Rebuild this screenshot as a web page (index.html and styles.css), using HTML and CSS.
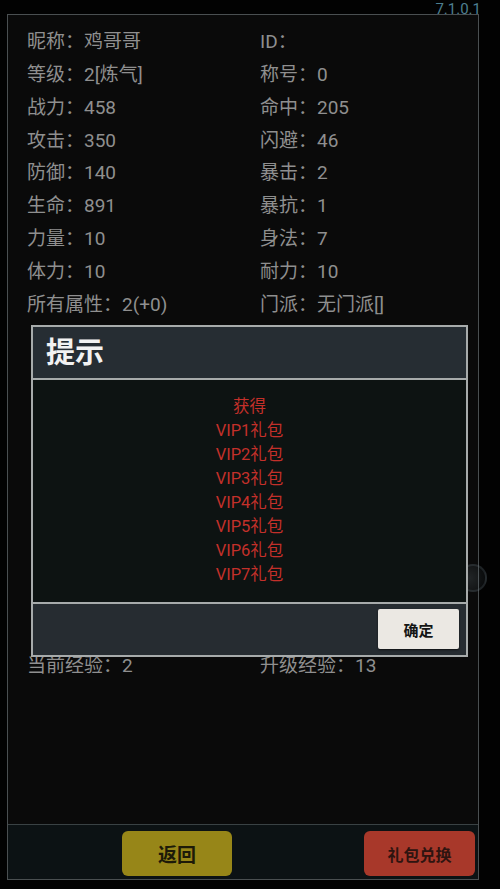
FILE: index.html
```html
<!DOCTYPE html>
<html lang="zh">
<head>
<meta charset="utf-8">
<title>角色属性</title>
<link rel="stylesheet" href="styles.css">
</head>
<body>
<div class="version">7.1.0.1</div>
<div class="panel">
  <div class="stats">
    <div class="row"><span class="cell">昵称：鸡哥哥</span><span class="cell">ID：</span></div>
    <div class="row"><span class="cell">等级：2[炼气]</span><span class="cell">称号：0</span></div>
    <div class="row"><span class="cell">战力：458</span><span class="cell">命中：205</span></div>
    <div class="row"><span class="cell">攻击：350</span><span class="cell">闪避：46</span></div>
    <div class="row"><span class="cell">防御：140</span><span class="cell">暴击：2</span></div>
    <div class="row"><span class="cell">生命：891</span><span class="cell">暴抗：1</span></div>
    <div class="row"><span class="cell">力量：10</span><span class="cell">身法：7</span></div>
    <div class="row"><span class="cell">体力：10</span><span class="cell">耐力：10</span></div>
    <div class="row"><span class="cell">所有属性：2(+0)</span><span class="cell">门派：无门派[]</span></div>
    <div class="hidden-rows"></div>
    <div class="row"><span class="cell">当前经验：2</span><span class="cell">升级经验：13</span></div>
  </div>
  <div class="bottombar">
    <button class="btn btn-back">返回</button>
    <button class="btn btn-gift">礼包兑换</button>
  </div>
</div>

<div class="floatball"></div>

<div class="dialog">
  <div class="dlg-title">提示</div>
  <div class="dlg-body">
    <div>获得</div>
    <div>VIP1礼包</div>
    <div>VIP2礼包</div>
    <div>VIP3礼包</div>
    <div>VIP4礼包</div>
    <div>VIP5礼包</div>
    <div>VIP6礼包</div>
    <div>VIP7礼包</div>
  </div>
  <div class="dlg-foot">
    <button class="ok">确定</button>
  </div>
</div>
</body>
</html>
```
FILE: styles.css
```css
* { box-sizing: border-box; }
html, body {
  margin: 0;
  padding: 0;
  background: #020202;
  width: 500px;
  height: 889px;
  overflow: hidden;
  font-family: Roboto, "Noto Sans CJK SC", sans-serif;
}
.version {
  height: 14px;
  line-height: 19px;
  font-size: 15px;
  text-align: right;
  padding-right: 19px;
  color: #4d7f90;
  position: relative;
  z-index: 2;
}
.panel {
  margin-left: 7px;
  width: 472px;
  height: 866px;
  border: 1px solid #4a4f51;
  background: #0a0a0a;
  display: flex;
  flex-direction: column;
}
.stats {
  flex: 1;
  padding: 11px 0 0 19px;
}
.row {
  display: flex;
  height: 32.85px;
  line-height: 32.85px;
  font-size: 19px;
  color: #8f8f8f;
}
.cell { width: 233px; flex-shrink: 0; white-space: nowrap; }
.hidden-rows { height: 328.5px; }
.bottombar {
  height: 55px;
  border-top: 1px solid #3a4244;
  background: #0c1214;
  display: flex;
  align-items: flex-start;
  padding: 6px 0 0 114px;
  gap: 132px;
}
.btn {
  height: 45px;
  width: 110px;
  border: none;
  border-radius: 6px;
  font-family: "Noto Sans CJK SC", sans-serif;
  font-weight: bold;
  padding: 0;
}
.btn-back {
  background: #978618;
  color: #1d1a08;
  font-size: 19px;
}
.btn-gift {
  width: 111px;
  background: #a8382a;
  color: #2e1410;
  font-size: 16px;
}
.floatball {
  position: absolute;
  left: 459px;
  top: 564px;
  width: 28px;
  height: 28px;
  border-radius: 50%;
  border: 2px solid rgba(120, 140, 150, 0.18);
  background: radial-gradient(circle at 35% 50%, rgba(140, 160, 170, 0.18), rgba(60, 75, 85, 0.08));
}
.dialog {
  position: absolute;
  left: 31px;
  top: 325px;
  width: 437px;
  height: 332px;
  border: 2px solid #a7abab;
  background: #262c31;
  display: flex;
  flex-direction: column;
}
.dlg-title {
  height: 53px;
  background: #262d33;
  border-bottom: 2px solid #a7abab;
  color: #f2f2f2;
  font-family: "Noto Sans CJK SC", sans-serif;
  font-size: 29px;
  font-weight: bold;
  line-height: 47px;
  padding-left: 13px;
}
.dlg-body {
  height: 224px;
  background: #0d1312;
  border-bottom: 2px solid #a7abab;
  padding-top: 15px;
  text-align: center;
  color: #c3302a;
  font-size: 16.5px;
  line-height: 24px;
}
.dlg-foot {
  flex: 1;
  background: #262c31;
  display: flex;
  justify-content: flex-end;
  align-items: flex-start;
  padding: 5px 7px 0 0;
}
.ok {
  width: 81px;
  height: 40px;
  background: #ebe8e3;
  border: none;
  border-radius: 2px;
  box-shadow: 0 1px 2px rgba(0, 0, 0, 0.6);
  color: #151515;
  font-family: "Noto Sans CJK SC", sans-serif;
  font-size: 15px;
  font-weight: bold;
  padding: 0;
}
```
